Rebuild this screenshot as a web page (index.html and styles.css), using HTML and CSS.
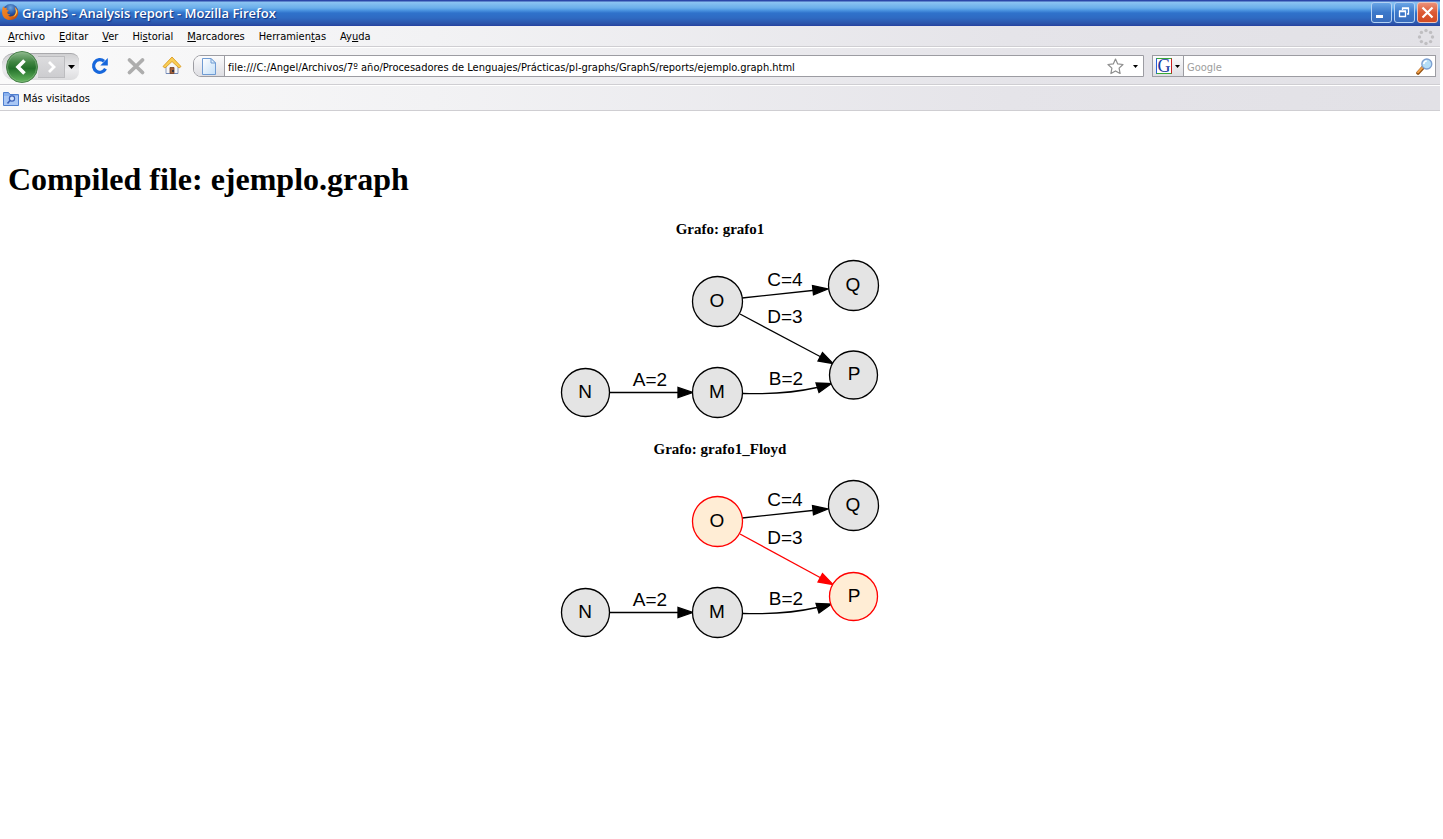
FILE: index.html
```html
<!DOCTYPE html>
<html lang="es">
<head>
<meta charset="utf-8">
<title>GraphS - Analysis report - Mozilla Firefox</title>
<link rel="stylesheet" href="styles.css">
</head>
<body>
<header class="browser">
  <div class="titlebar">
    <svg class="app-icon" width="18" height="18" viewBox="0 0 18 18" aria-hidden="true">
      <defs>
        <radialGradient id="globe" cx="0.5" cy="0.25" r="0.75"><stop offset="0" stop-color="#6fa6dc"/><stop offset="0.5" stop-color="#2c5aa8"/><stop offset="1" stop-color="#101f5a"/></radialGradient>
        <linearGradient id="fox" x1="0" y1="0" x2="1" y2="1"><stop offset="0" stop-color="#f08a2c"/><stop offset="0.6" stop-color="#e8741a"/><stop offset="1" stop-color="#a8360c"/></linearGradient>
      </defs>
      <circle cx="9.500" cy="8.500" r="7.500" fill="url(#globe)"/>
      <path d="M2.200 3.200l1.300 1.800 2.500-.3-.7 1.800 2.700 1c-.5 1-1.900 1.200-1.700 2.200.4 1.500 1.700 1.700 3 1.200-.4 1.300-1.500 1.800-2.500 1.600 2.800 2 7.400.5 8-3.500.2-2.200-.3-4-1.600-5.600 2.500 1.500 4 3.600 4 6.100 0 4.600-3.400 7.500-8 7.500-4.600 0-8.100-3-8.100-7.800 0-2.400.3-4.400 1.100-6z" fill="url(#fox)"/>
      <path d="M14 4.500c1.500 1.500 2.200 3 1.800 5.500-.6 2.300-2 3.600-4 4.200 2-1.500 3.300-3.500 3.100-5.700 0-1.500-.3-2.800-.9-4z" fill="#ffdc58"/>
    </svg>
    <span class="title">GraphS - Analysis report - Mozilla Firefox</span>
    <div class="window-buttons">
      <button class="win" type="button" aria-label="Minimizar"><svg width="19" height="19" viewBox="0 0 19 19"><path d="M4 12h7v3H4z" fill="#fff"/></svg></button>
      <button class="win" type="button" aria-label="Restaurar"><svg width="19" height="19" viewBox="0 0 19 19"><path d="M7.500 7V5.500h6v5.500H12M7 5h7" fill="none" stroke="#fff" stroke-width="1.300"/><path d="M4.500 8.500h6v5h-6zM4 8h7" fill="none" stroke="#fff" stroke-width="1.300"/></svg></button>
      <button class="win win-close" type="button" aria-label="Cerrar"><svg width="19" height="19" viewBox="0 0 19 19"><path d="M4.500 4.500l10 10M14.500 4.500l-10 10" stroke="#fff" stroke-width="2.200"/></svg></button>
    </div>
  </div>

  <div class="toolbox">
    <nav class="menubar">
      <button type="button"><u>A</u>rchivo</button>
      <button type="button"><u>E</u>ditar</button>
      <button type="button"><u>V</u>er</button>
      <button type="button">Hi<u>s</u>torial</button>
      <button type="button"><u>M</u>arcadores</button>
      <button type="button">Herramien<u>t</u>as</button>
      <button type="button">Ay<u>u</u>da</button>
      <svg class="throbber" width="18" height="18" viewBox="0 0 18 18" fill="#bfbec1" aria-hidden="true">
        <circle cx="9" cy="2.500" r="1.700"/><circle cx="13.600" cy="4.400" r="1.700"/><circle cx="15.500" cy="9" r="1.700"/><circle cx="13.600" cy="13.600" r="1.700"/><circle cx="9" cy="15.500" r="1.700"/><circle cx="4.400" cy="13.600" r="1.700"/><circle cx="2.500" cy="9" r="1.700"/><circle cx="4.400" cy="4.400" r="1.700"/>
      </svg>
    </nav>

    <div class="navbar">
      <div class="history">
        <button class="back" type="button" aria-label="Atrás"><svg width="32" height="32" viewBox="0 0 32 32">
          <defs><linearGradient id="green" x1="0" y1="0" x2="0" y2="1"><stop offset="0" stop-color="#8fb98f"/><stop offset="0.35" stop-color="#3f8441"/><stop offset="0.55" stop-color="#23702a"/><stop offset="1" stop-color="#69ba62"/></linearGradient></defs>
          <circle cx="16" cy="16" r="15.500" fill="url(#green)" stroke="#477f49"/>
          <circle cx="16" cy="16" r="14.500" fill="none" stroke="#8fbc8c" stroke-opacity="0.500"/>
          <path d="M18.500 9.500L12 16l6.500 6.500" fill="none" stroke="#fff" stroke-width="3.600"/></svg></button>
        <button class="forward" type="button" aria-label="Adelante"><svg width="26" height="20" viewBox="0 0 26 20"><path d="M11 5l5 5-5 5" fill="none" stroke="#fff" stroke-width="2.800"/></svg></button>
        <button class="recent" type="button" aria-label="Páginas recientes"><svg width="7" height="4" viewBox="0 0 7 4"><path d="M0 0h7L3.500 4z"/></svg></button>
      </div>
      <div class="actions">
        <button type="button" aria-label="Recargar"><svg width="20" height="20" viewBox="0 0 20 20"><path d="M15.500 12.800A6.300 6.300 0 1 1 14 5.200" fill="none" stroke="#1767dc" stroke-width="3.200"/><path d="M17.800 2v7.500h-7.500z" fill="#1767dc"/></svg></button>
        <button type="button" aria-label="Detener"><svg width="20" height="20" viewBox="0 0 20 20"><path d="M3.500 4l13 12.500M16.500 4l-13 12.500" stroke="#adadad" stroke-width="3.800" stroke-linecap="round"/></svg></button>
        <button type="button" aria-label="Página de inicio"><svg width="20" height="20" viewBox="0 0 20 20"><path d="M4 10l6-6 6 6v7.500H4z" fill="#f6f7fa" stroke="#8b9cc0"/><path d="M4 17.500h12" stroke="#7089b8"/><path d="M8 11.500h4v6H8z" fill="#a3603a" stroke="#754023" stroke-width="0.800"/><path d="M10 14h2v2h-2z" fill="#334"/><path d="M10 1L1 10.500 3 12l7-6.500 7 6.500 2-1.500z" fill="#f9ce55" stroke="#d99a25" stroke-width="0.900" stroke-linejoin="round"/></svg></button>
      </div>
      <div class="field urlbar">
        <span class="identity"><svg width="14" height="17" viewBox="0 0 14 17"><defs><linearGradient id="page" x1="0" y1="0" x2="1" y2="1"><stop offset="0" stop-color="#fff"/><stop offset="1" stop-color="#c4dff8"/></linearGradient></defs><path d="M.5.500h8.500l4.500 4.500v11.500H.5z" fill="url(#page)" stroke="#6f9bd3"/><path d="M9 .5V5h4.500z" fill="#e4f1fc" stroke="#6f9bd3"/></svg></span>
        <input type="text" aria-label="Dirección" value="file:///C:/Angel/Archivos/7º año/Procesadores de Lenguajes/Prácticas/pl-graphs/GraphS/reports/ejemplo.graph.html">
        <button type="button" aria-label="Añadir a marcadores"><svg width="17" height="17" viewBox="0 0 17 17"><path d="M8.500 1l2.200 4.900 5.300.6-3.900 3.600 1 5.400-4.600-2.600-4.600 2.600 1-5.400L1 6.500l5.300-.6z" fill="#fff" stroke="#8d8d8d" stroke-width="1.200" stroke-linejoin="round"/></svg></button>
        <button class="drop" type="button" aria-label="Historial de direcciones"><svg width="5" height="3" viewBox="0 0 5 3"><path d="M0 0h5L2.500 3z"/></svg></button>
      </div>
      <div class="field searchbar">
        <button class="engine" type="button" aria-label="Motor de búsqueda"><span class="engine-logo">G</span><svg width="5" height="3" viewBox="0 0 5 3"><path d="M0 0h5L2.500 3z"/></svg></button>
        <input type="text" aria-label="Buscar" placeholder="Google">
        <button class="go" type="button" aria-label="Buscar"><svg width="17" height="17" viewBox="0 0 17 17"><path d="M7 9.500L2 15" stroke="#93500f" stroke-width="3.600" stroke-linecap="round"/><path d="M6.500 9.500L2 14.300" stroke="#f1a04a" stroke-width="2" stroke-linecap="round"/><circle cx="10.800" cy="6" r="5" fill="#b5def7" stroke="#7d9fd0" stroke-width="1.300"/><path d="M7.800 6a3 3 0 0 1 3-3" fill="none" stroke="#fff" stroke-width="1.500"/></svg></button>
      </div>
    </div>

    <div class="bookmarks">
      <button type="button"><svg width="16" height="15" viewBox="0 0 16 15" aria-hidden="true"><path d="M.5 1.500h5l1.500 2h8.500v11H.5z" fill="#8bb2ee" stroke="#4f7fcf"/><path d="M1 5h14v9H1z" fill="#a9c7f5"/><circle cx="9" cy="7.500" r="2.600" fill="#d4e5fc" stroke="#3d62b8" stroke-width="1.200"/><path d="M7 9.500L4.500 12.500" stroke="#3d62b8" stroke-width="1.600"/></svg><span>Más visitados</span></button>
    </div>
  </div>
</header>

<main class="report">
  <h1>Compiled file: ejemplo.graph</h1>

  <section class="graph">
    <h2>Grafo: grafo1</h2>
    <svg width="330" height="168" viewBox="0 0 330 168" role="img" aria-label="grafo1">
      <g class="edge"><path d="M187 43L262 35"/><path class="tip" d="M273 34l-14.500 5.800-1-9.300z"/></g>
      <g class="edge"><path d="M185 59L266 102"/><path class="tip" d="M278 108.500l-15-2.500 4.500-8.500z"/></g>
      <g class="edge"><path d="M55 137.500h72"/><path class="tip" d="M138 137.500l-15 5v-10z"/></g>
      <g class="edge"><path d="M188 138.500c30 1 52-1 74-6"/><path class="tip" d="M276.500 128.500l-12.500 9-3-9.500z"/></g>
      <g class="node"><circle cx="162.500" cy="46.500" r="25"/><text x="162" y="52">O</text></g>
      <g class="node"><circle cx="298.500" cy="30.500" r="25"/><text x="298" y="36">Q</text></g>
      <g class="node"><circle cx="298.500" cy="120" r="24"/><text x="299" y="125">P</text></g>
      <g class="node"><circle cx="162.500" cy="137.500" r="25"/><text x="162" y="143">M</text></g>
      <g class="node"><circle cx="30.500" cy="137.500" r="24"/><text x="30" y="143">N</text></g>
      <g class="label"><text x="230" y="31">C=4</text><text x="230" y="68">D=3</text><text x="231" y="130">B=2</text><text x="95" y="131">A=2</text></g>
    </svg>
  </section>

  <section class="graph">
    <h2>Grafo: grafo1_Floyd</h2>
    <svg width="330" height="168" viewBox="0 0 330 168" role="img" aria-label="grafo1_Floyd">
      <g class="edge"><path d="M187 43L262 35"/><path class="tip" d="M273 34l-14.500 5.800-1-9.300z"/></g>
      <g class="edge marked"><path d="M185 59L266 103"/><path class="tip" d="M278 109.500l-15-2.500 4.500-8.500z"/></g>
      <g class="edge"><path d="M55 137.500h72"/><path class="tip" d="M138 137.500l-15 5v-10z"/></g>
      <g class="edge"><path d="M188 138.500c30 1 52-1 74-6"/><path class="tip" d="M276.500 129l-12.500 9-3-9.500z"/></g>
      <g class="node marked"><circle cx="162.500" cy="46.500" r="25"/><text x="162" y="52">O</text></g>
      <g class="node"><circle cx="298.500" cy="30.500" r="25"/><text x="298" y="36">Q</text></g>
      <g class="node marked"><circle cx="298.500" cy="121.500" r="24"/><text x="299" y="127">P</text></g>
      <g class="node"><circle cx="162.500" cy="137.500" r="25"/><text x="162" y="143">M</text></g>
      <g class="node"><circle cx="30.500" cy="137.500" r="24"/><text x="30" y="143">N</text></g>
      <g class="label"><text x="230" y="31">C=4</text><text x="230" y="69">D=3</text><text x="231" y="130">B=2</text><text x="95" y="131">A=2</text></g>
    </svg>
  </section>
</main>
</body>
</html>
```
FILE: styles.css
```css
* { box-sizing: border-box; }

body {
  margin: 0;
  padding-right: 3px;
  background: #fff;
  color: #000;
  font-family: "Liberation Serif", "Times New Roman", serif;
}

button, input {
  margin: 0;
  padding: 0;
  border: 0;
  background: none;
  color: inherit;
  font: inherit;
}

svg { display: block; flex: none; }

.browser {
  font-family: Tahoma, "DejaVu Sans Condensed", "Noto Sans", sans-serif;
  font-size: 11px;
  line-height: 14px;
}

/* Title bar */
.titlebar {
  display: flex;
  align-items: center;
  gap: 3px;
  height: 26px;
  padding: 0 2px 1px 1px;
  background: linear-gradient(#2b46a8 0, #2b46a8 1px, #8cc4f2 2px, #6aaeea 8px, #4f98e2 10px, #2f72cb 13px, #2f6ac2 18px, #2b52a8 24px, #2440a0 26px);
}

.app-icon { align-self: flex-start; margin-top: 3px; }

.title {
  flex: 1;
  padding-top: 1px;
  color: #fff;
  font-family: "Trebuchet MS", "Open Sans", sans-serif;
  font-size: 13px;
  font-weight: 600;
  text-shadow: 1px 1px 1px #14307c;
}

.window-buttons { display: flex; gap: 2px; }

.win {
  width: 21px;
  height: 21px;
  border: 1px solid #b4d2f3;
  border-radius: 3px;
  background: linear-gradient(#6aa6e6, #3b78ca 50%, #386cbc);
}

.win-close {
  border-color: #f0c4b8;
  background: linear-gradient(#ec9078, #dc5a35 50%, #d24a22);
}

/* Toolbars */
.toolbox {
  background: linear-gradient(90deg, #fafafa, #f2f2f4 30%, #e5e4e9 70%, #e2e1e6);
}

.menubar, .navbar, .bookmarks {
  display: flex;
  align-items: center;
  border-bottom: 1px solid #cfced2;
}

.menubar {
  gap: 14px;
  height: 21px;
  padding: 1px 5px 0 8px;
}

.throbber { margin-left: auto; }

.navbar {
  height: 38px;
  padding: 0 4px 0 2px;
  border-top: 1px solid #fff;
}

.history {
  display: flex;
  align-items: center;
  width: 77px;
  height: 27px;
  padding-left: 4px;
  border-top: 1px solid #a9a9ac;
  border-radius: 12px 8px 8px 12px;
  background: linear-gradient(#d0d0d2, #ececee 60%, #dcdcde);
}

.back { z-index: 1; border-radius: 50%; }

.forward {
  height: 22px;
  border: solid #bcbcbf;
  border-width: 1px 1px 1px 0;
  background: linear-gradient(#dcdcde, #cdcdd0);
}

.recent { padding: 4px 3px; }

.actions {
  display: flex;
  gap: 16px;
  margin: 0 11px;
}

.field {
  display: flex;
  align-items: center;
  height: 22px;
  border: 1px solid #9c9ca2;
  background: #fff;
}

.field input {
  flex: 1;
  min-width: 0;
  height: 20px;
  padding: 2px 3px 0;
  outline: 0;
}

.field input::placeholder { color: #9d9d9d; opacity: 1; }

.urlbar {
  flex: 1;
  margin-right: 8px;
  border-radius: 8px 0 0 8px;
}

.identity {
  display: flex;
  align-items: center;
  align-self: stretch;
  padding: 0 8px;
  border-right: 1px solid #9c9ca2;
  border-radius: 7px 0 0 7px;
  background: linear-gradient(#fbfbfc, #dedee3);
}

.drop { padding: 8px 5px 8px 9px; }

.searchbar { width: 284px; }

.engine {
  display: flex;
  align-items: center;
  align-self: stretch;
  gap: 3px;
  padding: 0 3px;
  border-right: 1px solid #9c9ca2;
  background: linear-gradient(#fbfbfc, #dedee3);
}

.engine-logo {
  width: 16px;
  height: 16px;
  border: 1px solid;
  border-color: #38a838 #c82020 #38a838 #2860d8;
  background: #fff;
  color: #1838a0;
  font-family: "Liberation Serif", serif;
  font-size: 18px;
  line-height: 14px;
}

.go { padding-right: 2px; }

.bookmarks {
  height: 26px;
  padding-left: 3px;
  border-top: 1px solid #fff;
}

.bookmarks button {
  display: flex;
  align-items: center;
  gap: 4px;
}

.bookmarks span { padding-top: 2px; }

/* Report */
.report { padding: 50px 8px 8px; }

h1 {
  margin: 0 0 23px;
  font-size: 32px;
  line-height: 36px;
}

.graph {
  display: flex;
  flex-direction: column;
  align-items: center;
  margin-bottom: 17px;
}

h2 {
  margin: 0 0 17px;
  font-size: 15px;
  line-height: 18px;
}

.edge path { fill: none; stroke: #000; stroke-width: 1.3; }
.edge .tip { fill: #000; }
.node circle { fill: #e4e4e4; stroke: #000; stroke-width: 1.3; }
.node text, .label text {
  font-family: "Liberation Sans", Arial, sans-serif;
  font-size: 19px;
  text-anchor: middle;
}
.edge.marked path { stroke: #f00; }
.edge.marked .tip { fill: #f00; }
.node.marked circle { fill: #ffedd5; stroke: #f00; }
```
